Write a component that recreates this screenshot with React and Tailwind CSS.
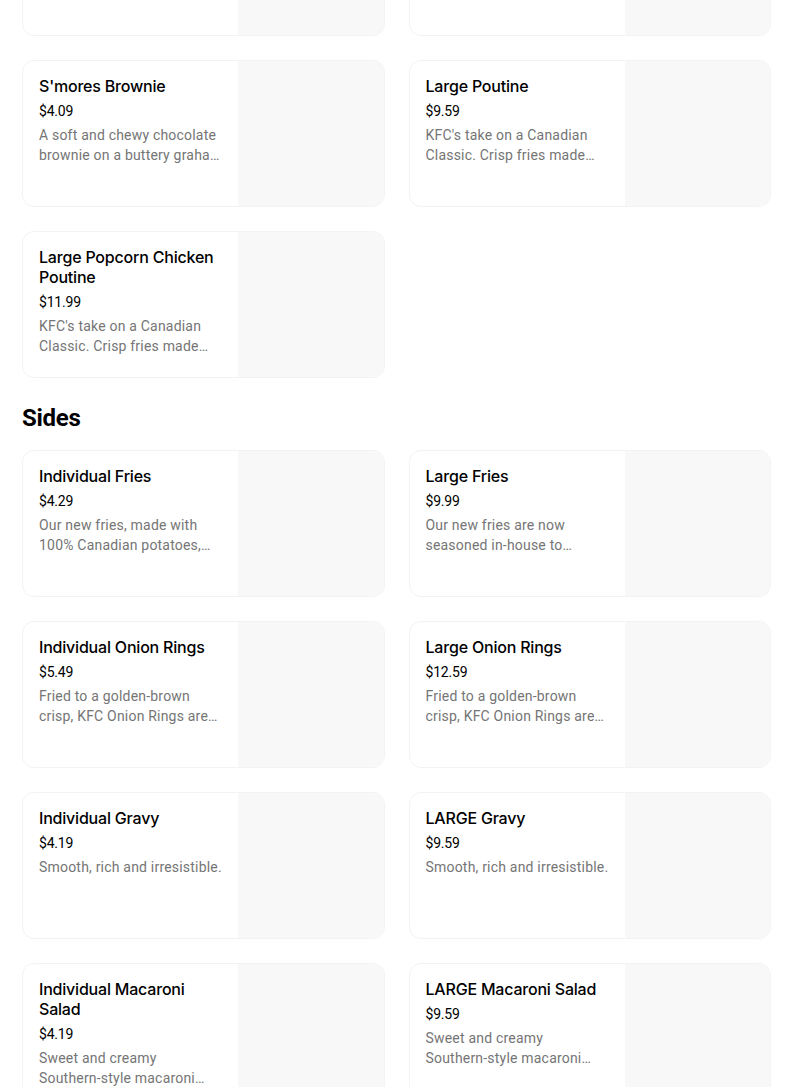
const TOP = [
  { name: 'Large Chicken Poutine', price: '$10.99', desc: "KFC's take on a Canadian Classic. Crisp fries made with 100% Canadian potatoes." },
  { name: 'Individual Poutine', price: '$6.49', desc: "KFC's take on a Canadian Classic. Crisp fries made with 100% Canadian potatoes." },
  { name: "S'mores Brownie", price: '$4.09', desc: 'A soft and chewy chocolate brownie on a buttery graham cracker crust, topped with marshmallow.' },
  { name: 'Large Poutine', price: '$9.59', desc: "KFC's take on a Canadian Classic. Crisp fries made with 100% Canadian potatoes." },
  { name: 'Large Popcorn Chicken Poutine', price: '$11.99', desc: "KFC's take on a Canadian Classic. Crisp fries made with 100% Canadian potatoes." },
];

const macaroni = (
  <>
    Sweet and creamy <span className="whitespace-nowrap">Southern-style</span> macaroni salad, a classic side.
  </>
);

const SIDES = [
  { name: 'Individual Fries', price: '$4.29', desc: 'Our new fries, made with 100% Canadian potatoes, are seasoned in-house.' },
  { name: 'Large Fries', price: '$9.99', desc: 'Our new fries are now seasoned in-house to perfection.' },
  { name: 'Individual Onion Rings', price: '$5.49', desc: 'Fried to a golden-brown crisp, KFC Onion Rings are the perfect side.' },
  { name: 'Large Onion Rings', price: '$12.59', desc: 'Fried to a golden-brown crisp, KFC Onion Rings are the perfect side.' },
  { name: 'Individual Gravy', price: '$4.19', desc: 'Smooth, rich and irresistible.' },
  { name: 'LARGE Gravy', price: '$9.59', desc: 'Smooth, rich and irresistible.' },
  { name: 'Individual Macaroni Salad', price: '$4.19', desc: macaroni },
  { name: 'LARGE Macaroni Salad', price: '$9.59', desc: macaroni },
];

function ItemCard({ item }) {
  return (
    <div className="flex h-[147px] overflow-hidden rounded-xl border border-[#f3f3f3] bg-white">
      <div className="w-[215px] shrink-0 pl-4 pr-[14px] pt-[15px]">
        <div className="font-['Inter',sans-serif] text-[16px] font-medium leading-5 tracking-[-0.2px] text-black">{item.name}</div>
        <div className="mt-[5px] text-[14px] leading-5 tracking-[-0.2px] text-black">{item.price}</div>
        <div className="mt-1 line-clamp-2 text-[14px] leading-5 tracking-[0.2px] text-[#757575]">{item.desc}</div>
      </div>
      <div className="flex-1 bg-[#f8f8f8]" />
    </div>
  );
}

export default function App() {
  return (
    <div className="min-h-screen overflow-hidden bg-white pl-[22px] pr-[33px]" style={{ fontFamily: 'Roboto, "Liberation Sans", sans-serif' }}>
      <div className="-mt-[111px] grid grid-cols-2 gap-6">
        {TOP.map((item) => (
          <ItemCard key={item.name} item={item} />
        ))}
      </div>

      <h2 className="mb-4 mt-6 text-[24px] font-bold leading-8 tracking-[-0.3px] text-black">Sides</h2>

      <div className="grid grid-cols-2 gap-6">
        {SIDES.map((item) => (
          <ItemCard key={item.name} item={item} />
        ))}
      </div>
    </div>
  );
}
